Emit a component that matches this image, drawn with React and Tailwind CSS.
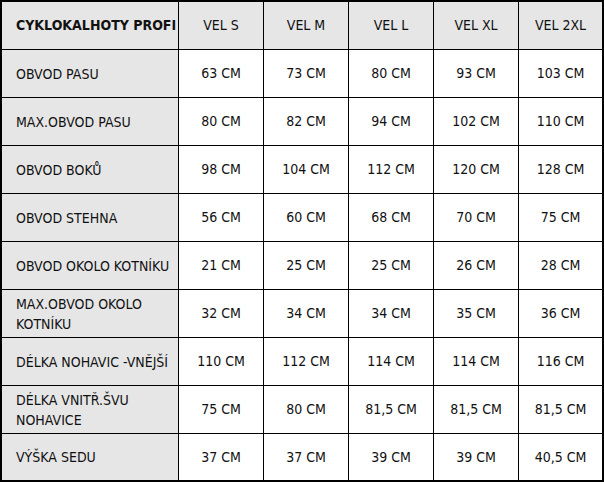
import React from 'react'

const sizes = ['VEL S', 'VEL M', 'VEL L', 'VEL XL', 'VEL 2XL']

const rows = [
  { label: ['OBVOD PASU'], values: ['63 CM', '73 CM', '80 CM', '93 CM', '103 CM'] },
  { label: ['MAX.OBVOD PASU'], values: ['80 CM', '82 CM', '94 CM', '102 CM', '110 CM'] },
  { label: ['OBVOD BOKŮ'], values: ['98 CM', '104 CM', '112 CM', '120 CM', '128 CM'] },
  { label: ['OBVOD STEHNA'], values: ['56 CM', '60 CM', '68 CM', '70 CM', '75 CM'] },
  { label: ['OBVOD OKOLO KOTNÍKU'], values: ['21 CM', '25 CM', '25 CM', '26 CM', '28 CM'] },
  { label: ['MAX.OBVOD OKOLO', 'KOTNÍKU'], values: ['32 CM', '34 CM', '34 CM', '35 CM', '36 CM'] },
  { label: ['DÉLKA NOHAVIC -VNĚJŠÍ'], values: ['110 CM', '112 CM', '114 CM', '114 CM', '116 CM'] },
  { label: ['DÉLKA VNITŘ.ŠVU', 'NOHAVICE'], values: ['75 CM', '80 CM', '81,5 CM', '81,5 CM', '81,5 CM'] },
  { label: ['VÝŠKA SEDU'], values: ['37 CM', '37 CM', '39 CM', '39 CM', '40,5 CM'] },
]

const App = () => {
  return (
    <div className="w-[604px] h-[482px] bg-white">
      <div
        className="grid grid-cols-[176px_84px_84px_84px_84px_83px] grid-rows-[repeat(9,47px)_46px] gap-px bg-black border-2 border-black text-[14px] text-[#111] whitespace-nowrap"
        style={{ fontFamily: '"DejaVu Sans Condensed", "DejaVu Sans", sans-serif' }}
      >
        <div className="bg-[#e6e6e6] flex items-center pl-[14px] font-bold">CYKLOKALHOTY PROFI</div>
        {sizes.map(s => (
          <div key={s} className="bg-[#e6e6e6] flex items-center justify-center">{s}</div>
        ))}
        {rows.map((row, i) => (
          <React.Fragment key={i}>
            <div className="bg-[#e6e6e6] flex flex-col justify-center pl-[14px] leading-5">
              {row.label.map(l => <span key={l}>{l}</span>)}
            </div>
            {row.values.map((v, j) => (
              <div key={j} className="bg-white flex items-center justify-center">{v}</div>
            ))}
          </React.Fragment>
        ))}
      </div>
    </div>
  )
}

export default App
